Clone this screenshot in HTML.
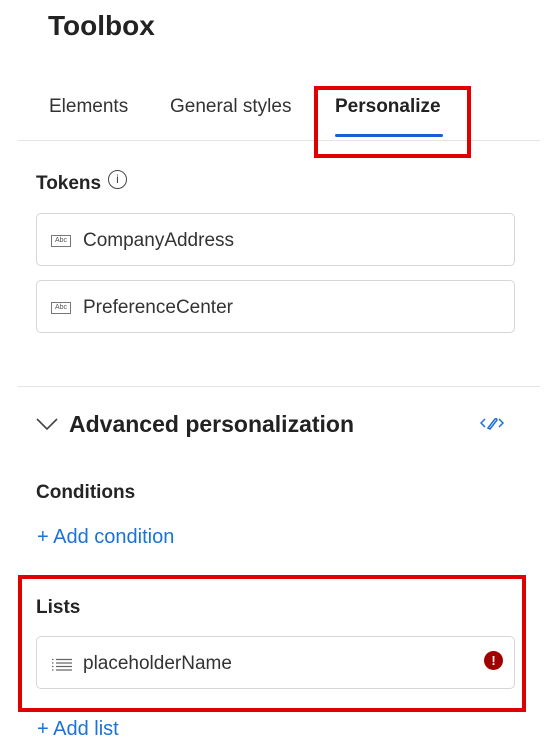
<!DOCTYPE html>
<html><head><style>
body{margin:0;width:547px;height:753px;background:#fff;font-family:"Liberation Sans",sans-serif;color:#242424;position:relative;overflow:hidden}
.a{position:absolute;white-space:nowrap}
.box{position:absolute;left:36px;width:479px;height:53px;border:1px solid #d6d6d6;border-radius:5px;box-sizing:border-box}
.box span{position:absolute;left:46px;top:16px;font-size:19px;color:#333}
.abc{position:absolute;left:14px;top:21px;width:20px;height:12px;border:1px solid #777;font-size:7px;line-height:10px;text-align:center;color:#555;box-sizing:border-box}
.red{position:absolute;border:4px solid #e00000;box-sizing:border-box}
</style></head><body>
<div class="a" style="left:48px;top:10px;font-size:28px;font-weight:bold;color:#222">Toolbox</div>
<div class="a" style="left:49px;top:96px;font-size:19px;color:#333">Elements</div>
<div class="a" style="left:170px;top:96px;font-size:19px;color:#333">General styles</div>
<div class="a" style="left:335px;top:96px;font-size:19px;font-weight:bold;color:#222">Personalize</div>
<div class="a" style="left:335px;top:134px;width:108px;height:3px;background:#1a5ed6;border-radius:2px"></div>
<div class="a" style="left:18px;top:140px;width:522px;height:1px;background:#e4e4e4"></div>
<div class="red" style="left:314px;top:86px;width:157px;height:72px"></div>

<div class="a" style="left:36px;top:173px;font-size:19px;font-weight:bold">Tokens</div>
<div class="a" style="left:108px;top:170px;width:19px;height:19px;border:1.3px solid #444;border-radius:50%;box-sizing:border-box;font-size:12px;text-align:center;line-height:17px;color:#444">i</div>
<div class="box" style="top:213px"><div class="abc">Abc</div><span>CompanyAddress</span></div>
<div class="box" style="top:280px"><div class="abc">Abc</div><span>PreferenceCenter</span></div>
<div class="a" style="left:18px;top:386px;width:522px;height:1px;background:#e4e4e4"></div>

<svg class="a" style="left:36px;top:417px" width="22" height="14"><path d="M1 2 L11 12 L21 2" fill="none" stroke="#444" stroke-width="1.6"/></svg>
<div class="a" style="left:69px;top:411px;font-size:23px;font-weight:bold;color:#222">Advanced personalization</div>
<svg class="a" style="left:480px;top:415px" width="24" height="16"><path d="M5 4 L1 8 L5 12 M19 4 L23 8 L19 12 M8 13 L15 4 Q17 3 17 5 L10 14 Z" fill="none" stroke="#1a6fd6" stroke-width="1.5"/></svg>

<div class="a" style="left:36px;top:482px;font-size:19px;font-weight:bold">Conditions</div>
<div class="a" style="left:37px;top:526px;font-size:20px;color:#1a73d6">+ Add condition</div>

<div class="red" style="left:18px;top:575px;width:508px;height:137px"></div>
<div class="a" style="left:36px;top:597px;font-size:19px;font-weight:bold">Lists</div>
<div class="box" style="top:636px"><svg style="position:absolute;left:14px;top:21px" width="22" height="14"><path d="M1 1.5h1.5M5 1.5h16M1 5h1.5M5 5h16M1 8.5h1.5M5 8.5h16M1 12h1.5M5 12h16" stroke="#666" stroke-width="1.3"/></svg><span>placeholderName</span>
<div style="position:absolute;left:447px;top:14px;width:19px;height:19px;border-radius:50%;background:#a00000;color:#fff;font-size:13px;font-weight:bold;text-align:center;line-height:19px">!</div></div>
<div class="a" style="left:37px;top:718px;font-size:20px;color:#1a73d6">+ Add list</div>
</body></html>
